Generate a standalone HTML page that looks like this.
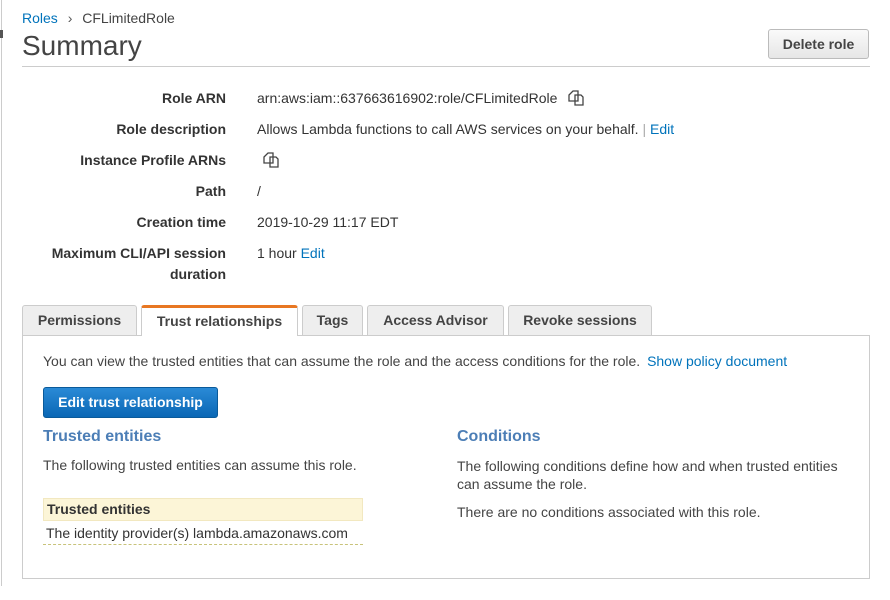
<!DOCTYPE html><html><head><style>
body{margin:0;width:890px;height:600px;background:#fff;font-family:"Liberation Sans",sans-serif;color:#444;font-size:14px;position:relative;overflow:hidden}
.a{position:absolute;white-space:nowrap}
a{color:#0073bb;text-decoration:none}
.lbl{right:664px;font-weight:bold;text-align:right;color:#333}
.val{left:257px;color:#333}
.tab{position:absolute;top:305px;height:30px;box-sizing:border-box;border:1px solid #ccc;border-bottom:none;background:#eee;font-weight:bold;color:#444;text-align:center;line-height:29px;border-radius:3px 3px 0 0}
h3{position:absolute;margin:0;font-size:16px;color:#4c7eb6;font-weight:bold}
</style></head><body>
<div class="a" style="left:1px;top:0;width:1px;height:586px;background:#ccc"></div>
<div class="a" style="left:0;top:30px;width:3px;height:8px;background:#555"></div>
<div class="a" style="left:22px;top:10px"><a>Roles</a> <span style="color:#555;margin:0 6px">›</span> <span style="color:#444">CFLimitedRole</span></div>
<div class="a" style="left:22px;top:30px;font-size:28px;color:#444">Summary</div>
<div class="a" style="left:22px;top:66px;width:848px;height:1px;background:#ccc"></div>
<div class="a" style="left:768px;top:29px;width:101px;height:30px;box-sizing:border-box;border:1px solid #bbb;border-radius:3px;background:linear-gradient(#fafafa,#e6e6e6);font-weight:bold;text-align:center;line-height:28px;color:#444">Delete role</div>
<div class="a lbl" style="top:90px">Role ARN</div><div class="a val" style="top:90px">arn:aws:iam::637663616902:role/CFLimitedRole <svg style="margin-left:6px;vertical-align:-3px" width="18" height="16" viewBox="0 0 18 16"><path d="M2 5l4-4h5v10H2z M8 5h2l4 0v0l2 2v8H8z" fill="#fff" stroke="#444" stroke-width="1.3"/></svg></div>
<div class="a lbl" style="top:121px">Role description</div><div class="a val" style="top:121px">Allows Lambda functions to call AWS services on your behalf. <span style="color:#aaa">|</span> <a>Edit</a></div>
<div class="a lbl" style="top:152px">Instance Profile ARNs</div><div class="a val" style="top:152px;left:262px"><svg width="18" height="16" viewBox="0 0 18 16"><path d="M2 5l4-4h5v10H2z M8 5h2l4 0v0l2 2v8H8z" fill="#fff" stroke="#444" stroke-width="1.3"/></svg></div>
<div class="a lbl" style="top:183px">Path</div><div class="a val" style="top:183px">/</div>
<div class="a lbl" style="top:214px">Creation time</div><div class="a val" style="top:214px">2019-10-29 11:17 EDT</div>
<div class="a lbl" style="top:243px;line-height:21px">Maximum CLI/API session<br>duration</div><div class="a val" style="top:245px">1 hour <a>Edit</a></div>
<div class="tab" style="left:22px;width:115px">Permissions</div>
<div class="tab" style="left:141px;width:157px;background:#fff;border-top:3px solid #e87722;line-height:27px;height:31px;z-index:2">Trust relationships</div>
<div class="tab" style="left:302px;width:61px">Tags</div>
<div class="tab" style="left:367px;width:137px">Access Advisor</div>
<div class="tab" style="left:508px;width:144px">Revoke sessions</div>
<div class="a" style="left:22px;top:335px;width:848px;height:244px;box-sizing:border-box;border:1px solid #ccc"></div>
<div class="a" style="left:43px;top:353px">You can view the trusted entities that can assume the role and the access conditions for the role. <a style="margin-left:3px">Show policy document</a></div>
<div class="a" style="left:43px;top:387px;width:175px;height:31px;box-sizing:border-box;border:1px solid #0a5a9a;border-radius:3px;background:linear-gradient(#2a8ad6,#0a67b5);color:#fff;font-weight:bold;text-align:center;line-height:29px">Edit trust relationship</div>
<h3 style="left:43px;top:428px">Trusted entities</h3>
<h3 style="left:457px;top:428px">Conditions</h3>
<div class="a" style="left:43px;top:457px">The following trusted entities can assume this role.</div>
<div class="a" style="left:457px;top:457px;line-height:18px">The following conditions define how and when trusted entities<br>can assume the role.</div>
<div class="a" style="left:457px;top:504px">There are no conditions associated with this role.</div>
<div class="a" style="left:43px;top:498px;width:320px;height:23px;box-sizing:border-box;background:#fcf5d7;border:1px solid #f2e8c0;font-weight:bold;color:#333;padding-left:3px;line-height:21px">Trusted entities</div>
<div class="a" style="left:43px;top:522px;width:320px;height:23px;box-sizing:border-box;border-bottom:1px dashed #c8c37a;padding-left:3px;line-height:22px;color:#333">The identity provider(s) lambda.amazonaws.com</div>
</body></html>
